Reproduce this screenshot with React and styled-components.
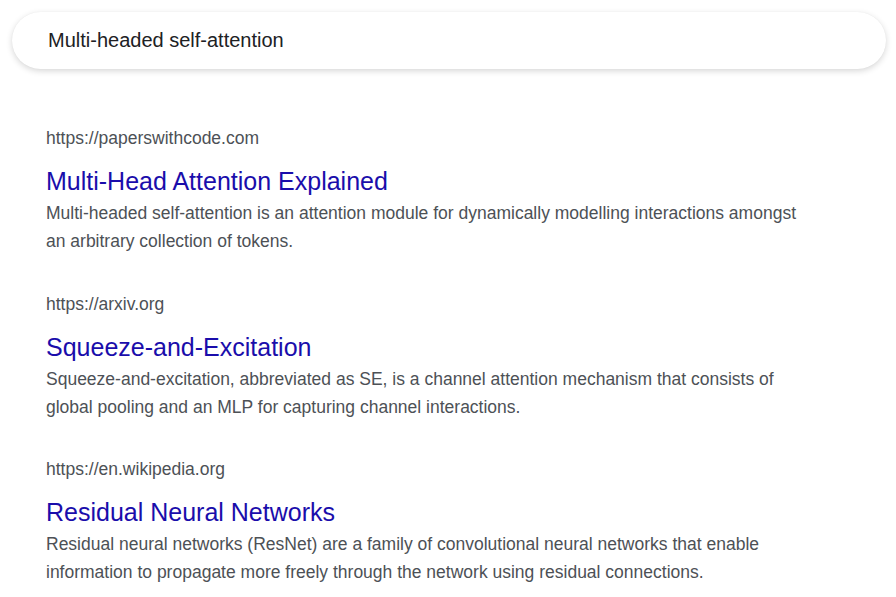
import React from "react";
import styled, { createGlobalStyle } from "styled-components";

const Global = createGlobalStyle`
  body {
    margin: 0;
    background: #ffffff;
    font-family: "Liberation Sans", Arial, sans-serif;
  }
`;

const Page = styled.div`
  padding: 12px 10px 0 12px;
`;

const SearchBar = styled.div`
  height: 57px;
  border-radius: 29px;
  background: #fff;
  box-shadow: 0 2px 6px rgba(0, 0, 0, 0.16), 0 0 1px rgba(0, 0, 0, 0.06);
  display: flex;
  align-items: center;
  padding: 0 36px;
  font-size: 20px;
  color: #202124;
`;

const Results = styled.div`
  padding: 57px 0 0 34px;
  display: flex;
  flex-direction: column;
  gap: 36.5px;
`;

const Result = styled.div`
  max-width: 762px;
`;

const Url = styled.div`
  font-size: 17.5px;
  line-height: 24px;
  color: #4d5156;
`;

const Title = styled.a`
  display: block;
  margin-top: 15px;
  font-size: 25px;
  line-height: 32px;
  color: #1a0dab;
  text-decoration: none;
`;

const Snippet = styled.p`
  margin: 2px 0 0;
  font-size: 17.5px;
  line-height: 28px;
  color: #4d5156;
`;

const results = [
  {
    url: "https://paperswithcode.com",
    title: "Multi-Head Attention Explained",
    text: "Multi-headed self-attention is an attention module for dynamically modelling interactions amongst an arbitrary collection of tokens.",
  },
  {
    url: "https://arxiv.org",
    title: "Squeeze-and-Excitation",
    text: "Squeeze-and-excitation, abbreviated as SE, is a channel attention mechanism that consists of global pooling and an MLP for capturing channel interactions.",
  },
  {
    url: "https://en.wikipedia.org",
    title: "Residual Neural Networks",
    text: "Residual neural networks (ResNet) are a family of convolutional neural networks that enable information to propagate more freely through the network using residual connections.",
  },
];

export default function App() {
  return (
    <Page>
      <Global />
      <SearchBar>Multi-headed self-attention</SearchBar>
      <Results>
        {results.map((r) => (
          <Result key={r.url}>
            <Url>{r.url}</Url>
            <Title href="#">{r.title}</Title>
            <Snippet>{r.text}</Snippet>
          </Result>
        ))}
      </Results>
    </Page>
  );
}
